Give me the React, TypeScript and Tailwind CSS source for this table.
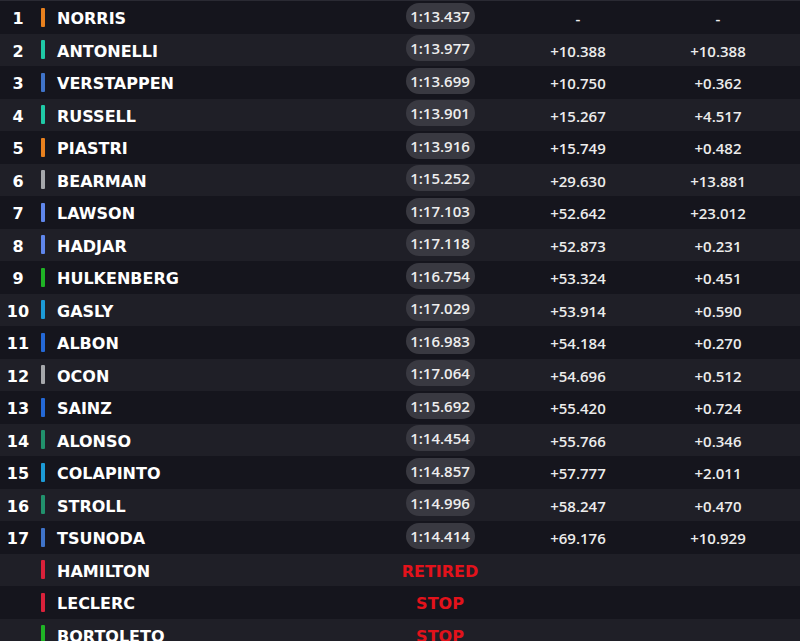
import React from 'react'

type Row = {
  pos?: number
  name: string
  color: string
  time?: string
  gap?: string
  int?: string
  status?: string
}

const ROWS: Row[] = [
  { pos: 1, name: 'NORRIS', color: '#e8801e', time: '1:13.437', gap: '-', int: '-' },
  { pos: 2, name: 'ANTONELLI', color: '#1fc9a6', time: '1:13.977', gap: '+10.388', int: '+10.388' },
  { pos: 3, name: 'VERSTAPPEN', color: '#3f73c9', time: '1:13.699', gap: '+10.750', int: '+0.362' },
  { pos: 4, name: 'RUSSELL', color: '#1fc9a6', time: '1:13.901', gap: '+15.267', int: '+4.517' },
  { pos: 5, name: 'PIASTRI', color: '#e8801e', time: '1:13.916', gap: '+15.749', int: '+0.482' },
  { pos: 6, name: 'BEARMAN', color: '#a5a7ab', time: '1:15.252', gap: '+29.630', int: '+13.881' },
  { pos: 7, name: 'LAWSON', color: '#5f86eb', time: '1:17.103', gap: '+52.642', int: '+23.012' },
  { pos: 8, name: 'HADJAR', color: '#5f86eb', time: '1:17.118', gap: '+52.873', int: '+0.231' },
  { pos: 9, name: 'HULKENBERG', color: '#1fb325', time: '1:16.754', gap: '+53.324', int: '+0.451' },
  { pos: 10, name: 'GASLY', color: '#1c9ad6', time: '1:17.029', gap: '+53.914', int: '+0.590' },
  { pos: 11, name: 'ALBON', color: '#2468d6', time: '1:16.983', gap: '+54.184', int: '+0.270' },
  { pos: 12, name: 'OCON', color: '#a5a7ab', time: '1:17.064', gap: '+54.696', int: '+0.512' },
  { pos: 13, name: 'SAINZ', color: '#2468d6', time: '1:15.692', gap: '+55.420', int: '+0.724' },
  { pos: 14, name: 'ALONSO', color: '#21916c', time: '1:14.454', gap: '+55.766', int: '+0.346' },
  { pos: 15, name: 'COLAPINTO', color: '#1c9ad6', time: '1:14.857', gap: '+57.777', int: '+2.011' },
  { pos: 16, name: 'STROLL', color: '#21916c', time: '1:14.996', gap: '+58.247', int: '+0.470' },
  { pos: 17, name: 'TSUNODA', color: '#3f73c9', time: '1:14.414', gap: '+69.176', int: '+10.929' },
  { name: 'HAMILTON', color: '#d9213a', status: 'RETIRED' },
  { name: 'LECLERC', color: '#d9213a', status: 'STOP' },
  { name: 'BORTOLETO', color: '#1fb325', status: 'STOP' },
]

export default function App() {
  return (
    <div className="w-[800px] h-[641px] overflow-hidden bg-[#15151d] border-t border-[#2a2a33]">
      {ROWS.map((r, i) => (
        <div
          key={r.name}
          className={
            'flex items-center h-[32.5px] ' + (i % 2 === 0 ? 'bg-[#15151d]' : 'bg-[#1f1f27]')
          }
        >
          <div className="w-[36px] text-center text-white font-bold text-[16px] pt-1 font-['DejaVu_Sans',sans-serif]">
            {r.pos ?? ''}
          </div>
          <div className="ml-[5px] w-[4px] h-[19px] rounded-[1px]" style={{ backgroundColor: r.color }} />
          <div className="ml-[12px] w-[323px] text-white font-bold text-[16px] pt-1 font-['DejaVu_Sans',sans-serif]">
            {r.name}
          </div>
          <div className="w-[120px] flex justify-center">
            {r.status ? (
              <span className="text-[#e3121b] font-bold text-[16px] pt-1 font-['DejaVu_Sans',sans-serif]">
                {r.status}
              </span>
            ) : (
              <span className="h-[26px] w-[69px] -mt-[3px] rounded-full bg-[#393941] text-[#ededed] text-[15px] font-semibold flex items-center justify-center font-['Open_Sans','Noto_Sans',sans-serif]">
                {r.time}
              </span>
            )}
          </div>
          <div className="w-[156px] text-center text-[#ececec] text-[15px] font-semibold pt-0.5 font-['Open_Sans','Noto_Sans',sans-serif]">
            {r.gap}
          </div>
          <div className="w-[124px] text-center text-[#ececec] text-[15px] font-semibold pt-0.5 font-['Open_Sans','Noto_Sans',sans-serif]">
            {r.int}
          </div>
        </div>
      ))}
    </div>
  )
}
